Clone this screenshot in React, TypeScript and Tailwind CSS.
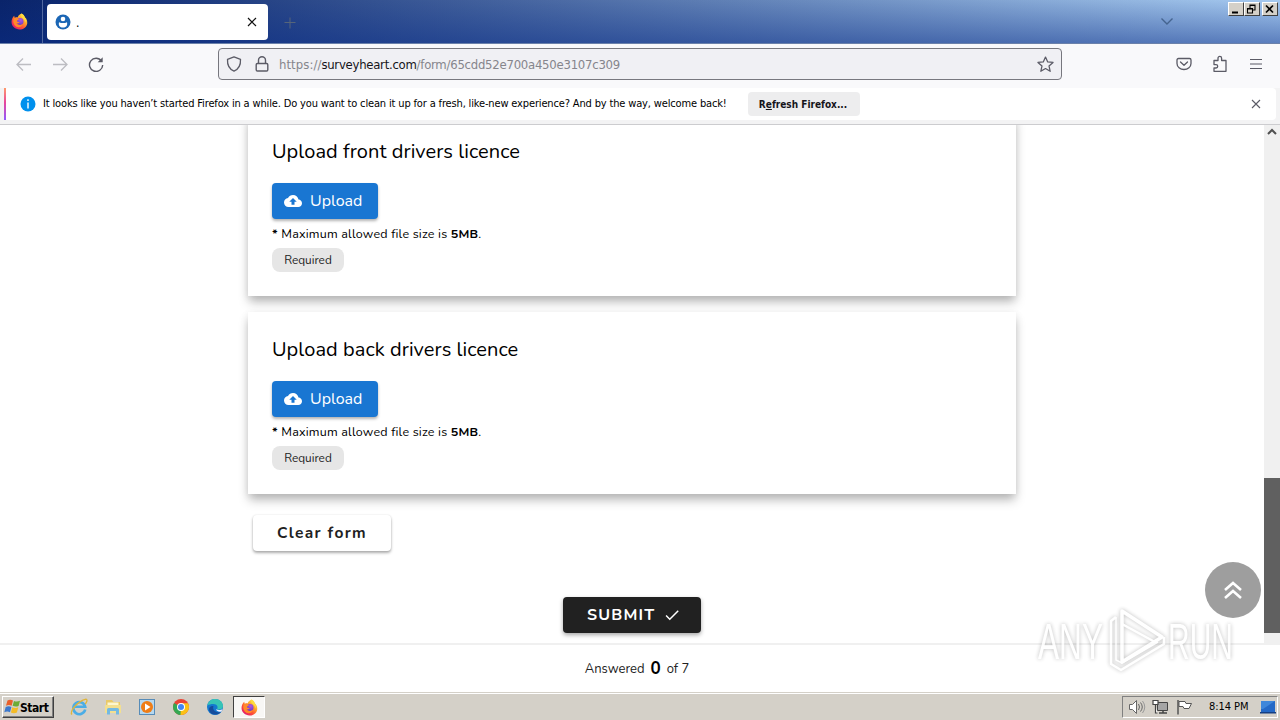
import React from 'react';

const UI_FONT = "font-['DejaVu_Sans_Condensed','DejaVu_Sans',sans-serif] [font-stretch:condensed]";

const FirefoxLogo: React.FC<{ size: number; id: string }> = ({ size, id }) => (
  <svg width={size} height={size} viewBox="0 0 32 32">
    <defs>
      <linearGradient id={`${id}-flame`} x1="0.9" y1="0.1" x2="0.2" y2="0.95">
        <stop offset="0" stopColor="#fff14a" />
        <stop offset="0.35" stopColor="#ffa32b" />
        <stop offset="0.65" stopColor="#ff5136" />
        <stop offset="1" stopColor="#e11a72" />
      </linearGradient>
      <radialGradient id={`${id}-globe`} cx="0.6" cy="0.3" r="0.8">
        <stop offset="0" stopColor="#b455e0" />
        <stop offset="1" stopColor="#5b3bc4" />
      </radialGradient>
    </defs>
    <path
      d="M20 1c4 2 5 5 6 7 4 3 5 8 4.500 12C29 27 23 31 16 31 8 31 1 25 1 17 1 12 3 8 6 5l1 4c2-1 4-1 6-1 0-3 3-5 7-7z"
      fill={`url(#${id}-flame)`}
    />
    <circle cx="17" cy="16" r="6.500" fill={`url(#${id}-globe)`} />
    <path d="M5 10c4-2 8-1 11 2-3 0-4 1-5 3 1 2 3 2 5 2-1 3-4 3-6 2 2 4 9 5 12 1-1 6-7 8-12 6C5 23 3 17 5 10z" fill="#ff8a2a" />
    <path d="M20 1c4 2 5 5 6 7 2 3 3 6 2 10-1-4-4-7-7-9-2-2-3-5-1-8z" fill="#ffdc3e" />
  </svg>
);

const TitleBar: React.FC = () => (
  <header className="relative flex h-11 shrink-0 items-start border-b border-[#6b81aa] bg-[linear-gradient(90deg,#0a246a_0%,#0f2b72_6%,#a6caf0_100%)]">
    <div className="absolute inset-0 bg-[linear-gradient(180deg,rgba(10,50,140,0)_0%,rgba(10,45,135,0.48)_100%)]" />
    <div className="relative flex h-[43px] w-[43px] items-center justify-center border-r border-[#5168a0] pr-[3px]">
      <FirefoxLogo size={17} id="app" />
    </div>
    <div className="relative mt-1 ml-1 flex h-9 w-[221px] items-center rounded bg-white pr-2.5 pl-2">
      <svg width="16" height="16" viewBox="0 0 16 16">
        <circle cx="8" cy="8" r="7.500" fill="#1b66b5" />
        <circle cx="8" cy="5" r="2.300" fill="#fff" />
        <path d="M4 8.200c2.600 1.200 5.400 1.200 8 0 .8 3.400-1 5.300-4 5.300s-4.800-1.900-4-5.300z" fill="#fff" />
      </svg>
      <span className={`${UI_FONT} ml-[5px] flex-1 pt-0.5 text-[12px] text-black`}>.</span>
      <svg width="12" height="12" viewBox="0 0 12 12" stroke="#111" strokeWidth="1.200">
        <path d="M2 2l8 8M10 2l-8 8" />
      </svg>
    </div>
    <svg className="relative mt-[17px] ml-4" width="12" height="12" viewBox="0 0 12 12" stroke="#56657a" strokeWidth="1">
      <path d="M6 0.500v11M0.500 5.500h11" />
    </svg>
    <svg className="relative mt-[17px] ml-auto" width="14" height="9" viewBox="0 0 14 9" fill="none" stroke="#45648f" strokeWidth="1.400">
      <path d="M1.500 1.500L7 7l5.500-5.500" />
    </svg>
    <div className="relative mt-0.5 mr-0.5 ml-[54px] flex">
      <WindowButton>
        <path d="M3 9.500h6" strokeWidth="2" />
      </WindowButton>
      <WindowButton>
        <path d="M5 5V2h5v5H8M4.500 2.500h6M2.500 5.500h5v4.500h-5zM2 6h6" strokeWidth="1.100" />
      </WindowButton>
      <span className="w-0.5" />
      <WindowButton>
        <path d="M3 2.500l7 7M10 2.500l-7 7" strokeWidth="1.700" />
      </WindowButton>
    </div>
  </header>
);

const WindowButton: React.FC<{ children: React.ReactNode }> = ({ children }) => (
  <div className="h-3.5 w-4 border border-t-white border-r-[#404040] border-b-[#404040] border-l-white bg-[#d4d0c8]">
    <svg width="13" height="12" viewBox="0 0 13 12" fill="none" stroke="#000">
      {children}
    </svg>
  </div>
);

const Toolbar: React.FC = () => (
  <div className="flex h-11 shrink-0 items-center bg-[#f9f9fb] pb-1">
    <div className="flex w-[218px] items-center gap-5 pl-4">
      <svg width="16" height="16" viewBox="0 0 16 16" fill="none" stroke="#bdbdc2" strokeWidth="1.300">
        <path d="M15 8.500H1.500M7 2.500l-6 6 6 6" />
      </svg>
      <svg width="16" height="16" viewBox="0 0 16 16" fill="none" stroke="#bdbdc2" strokeWidth="1.300">
        <path d="M1 8.500h13.500M9 2.500l6 6-6 6" />
      </svg>
      <svg width="16" height="16" viewBox="0 0 16 16" fill="none" stroke="#5b5b66" strokeWidth="1.400">
        <path d="M13.500 5A6.600 6.600 0 1 0 14.700 9" />
        <path d="M14.700 1.200v5H9.700z" fill="#5b5b66" stroke="none" />
      </svg>
    </div>
    <div className="flex h-8 w-[844px] items-center rounded border border-[#77777e] bg-[#f0f0f4] pr-[7px] pl-[7px]">
      <svg width="16" height="16" viewBox="0 0 16 16" fill="none" stroke="#5b5b66" strokeWidth="1.300">
        <path d="M8 0.800l6.500 2.500c.3 5-1.500 9.700-6.500 11.900C3 13 1.200 8.300 1.500 3.300z" strokeLinejoin="round" />
      </svg>
      <svg className="ml-3" width="16" height="16" viewBox="0 0 16 16" fill="none" stroke="#5b5b66" strokeWidth="1.400">
        <rect x="2.200" y="7.500" width="11.600" height="7.500" rx="1.200" />
        <path d="M4.500 7.500V4.300a3.500 3.500 0 0 1 7 0v3.200" />
      </svg>
      <span className={`${UI_FONT} ml-[9px] pt-0.5 text-[13px] whitespace-pre text-[#85858c]`}>
        <span className="tracking-[0.06px]">https://</span>
        <span className="tracking-[-0.27px] text-[#15141a]">surveyheart.com</span>
        <span className="tracking-[-0.25px]">/form/65cdd52e700a450e3107c309</span>
      </span>
      <svg className="ml-auto" width="17" height="17" viewBox="0 0 16 16" fill="none" stroke="#5b5b66" strokeWidth="1.200" strokeLinejoin="round">
        <path d="M8 1l2.100 4.600 5 .5-3.800 3.300 1.100 5L8 11.800l-4.400 2.600 1.100-5L.9 6.100l5-.5z" />
      </svg>
    </div>
    <div className="ml-auto flex items-center gap-5 pr-4">
      <svg width="16" height="16" viewBox="0 0 16 16" fill="none" stroke="#5b5b66" strokeWidth="1.300">
        <path d="M2.500 2.500h11q1.500 0 1.500 1.500v3.500a7 6 0 0 1-14 0V4q0-1.500 1.500-1.500z" />
        <path d="M4.500 6L8 9.300 11.500 6" strokeLinecap="round" strokeLinejoin="round" />
      </svg>
      <svg width="16" height="18" viewBox="0 0 16 18" fill="none" stroke="#5b5b66" strokeWidth="1.300" strokeLinejoin="round">
        <path d="M2 5.500h4V3.200a1.800 1.800 0 0 1 3.600 0v2.300h4.400v10.800H2v-3.300h2a1.700 1.700 0 0 0 0-3.400H2z" />
      </svg>
      <svg width="16" height="16" viewBox="0 0 16 16" stroke="#5b5b66" strokeWidth="1.200">
        <path d="M2 3.500h12M2 8h12M2 12.500h12" />
      </svg>
    </div>
  </div>
);

const NotificationBar: React.FC = () => (
  <div className="h-[37px] shrink-0 border-b border-[#cccccf] bg-[#f3f3f4] pr-1 pl-1">
    <div className="flex h-8 items-center rounded bg-white">
      <div className="h-full w-0.5 bg-[linear-gradient(180deg,#ff9a6b_0%,#e8479b_45%,#9059ff_100%)]" />
      <svg className="ml-3.5" width="16" height="16" viewBox="0 0 16 16">
        <circle cx="8" cy="8" r="7.500" fill="#0090ed" />
        <path d="M8 3.300v1.800M8 6.500v6" stroke="#fff" strokeWidth="1.400" />
      </svg>
      <span className={`${UI_FONT} ml-[7px] w-[705px] text-[11px] tracking-[-0.151px] whitespace-nowrap text-black`}>
        It looks like you haven’t started Firefox in a while. Do you want to clean it up for a fresh, like-new experience? And by the way, welcome back!
      </span>
      <button className={`${UI_FONT} h-6 w-28 rounded bg-[#ededee] pr-0.5 text-[10px] font-bold whitespace-nowrap text-[#15141a]`}>
        R<u>e</u>fresh Firefox...
      </button>
      <svg className="mr-[15px] ml-auto" width="10" height="10" viewBox="0 0 10 10" stroke="#5b5b66" strokeWidth="1.100">
        <path d="M1 1l8 8M9 1L1 9" />
      </svg>
    </div>
  </div>
);

const UploadCard: React.FC<{ title: string }> = ({ title }) => (
  <section className="flex h-[182px] shrink-0 flex-col items-start bg-white px-6 pt-6 shadow-[0_7px_10px_-1px_rgba(0,0,0,0.26),0_2px_8px_rgba(0,0,0,0.08)]">
    <h2 className="h-[27px] text-[20px] leading-[27px] font-normal tracking-[0.06px] whitespace-nowrap text-black">{title}</h2>
    <button className="mt-[18px] flex h-9 w-[106px] items-center rounded bg-[#1976d2] pl-3 text-white shadow-[0_2px_3px_rgba(0,0,0,0.3)]">
      <svg width="18" height="18" viewBox="0 0 24 24" fill="#fff">
        <path d="M19.350 10.040C18.670 6.590 15.640 4 12 4 9.110 4 6.600 5.640 5.350 8.040 2.340 8.360 0 10.910 0 14c0 3.310 2.690 6 6 6h13c2.760 0 5-2.240 5-5 0-2.640-2.050-4.780-4.650-4.960zM14 13v4h-4v-4H7l5-5 5 5h-3z" />
      </svg>
      <span className="ml-2 text-[16px]">Upload</span>
    </button>
    <p className="mt-[5px] h-5 text-[12.500px] leading-5 tracking-[0.19px] whitespace-nowrap text-black">
      <b>*</b> Maximum allowed file size is <b>5MB</b>.
    </p>
    <span className="mt-1 flex h-6 w-[72px] items-center justify-center rounded-lg bg-[#e6e6e6] pt-px text-[11.800px] text-[#222]">
      Required
    </span>
  </section>
);

const FormPage: React.FC = () => (
  <div className="flex h-[518px] shrink-0 overflow-hidden bg-white">
    <main className="flex flex-1 flex-col pl-[248px] font-['Nunito','Noto_Sans',sans-serif]">
      <div className="-mt-[11px] flex w-[768px] flex-col gap-4">
        <UploadCard title="Upload front drivers licence" />
        <UploadCard title="Upload back drivers licence" />
      </div>
      <button className="mt-[21px] ml-[5px] h-9 w-[138px] shrink-0 rounded bg-white text-[15.500px] font-bold tracking-[1.350px] whitespace-nowrap text-[#212121] shadow-[0_2px_3px_rgba(0,0,0,0.32),0_0_2px_rgba(0,0,0,0.1)]">
        Clear form
      </button>
      <button className="mt-[46px] ml-[315px] flex h-9 w-[138px] shrink-0 items-center rounded bg-[#212121] pl-6 text-[16px] font-bold tracking-[1.200px] text-white shadow-[0_2px_4px_rgba(0,0,0,0.35)]">
        <span className="w-[76px] text-left">SUBMIT</span>
        <svg width="18" height="18" viewBox="0 0 24 24" fill="#fff">
          <path d="M9 16.170L4.830 12l-1.420 1.410L9 19 21 7l-1.410-1.410z" />
        </svg>
      </button>
    </main>
    <div className="flex w-4 flex-col items-center bg-[#f0f0f0]">
      <svg className="mt-[3px] h-2 w-2.5 shrink-0" viewBox="0 0 10 8" fill="none" stroke="#505050" strokeWidth="2">
        <path d="M1 6l4-4 4 4" />
      </svg>
      <div className="mt-[342px] h-[155px] w-4 bg-[#606060]" />
    </div>
  </div>
);

const BottomBar: React.FC = () => (
  <footer className="flex h-[49px] shrink-0 items-center justify-center border-t-2 border-[#f0f0f0] bg-white pr-[6px] font-['Nunito','Noto_Sans',sans-serif] text-[13px] text-[#222]">
    <span className="pt-0.5">Answered</span>
    <b className="mx-1.5 text-[17px] leading-none text-black">0</b>
    <span className="pt-0.5">of 7</span>
  </footer>
);

const Watermark: React.FC = () => (
  <svg
    className="absolute top-[602px] left-[1030px] opacity-75 drop-shadow-[0_0_2px_rgba(0,0,0,0.35)]"
    width="250"
    height="76"
    viewBox="0 0 250 76"
    fill="none"
    stroke="#fff"
    strokeLinejoin="round"
  >
    <g fill="#fff" stroke="none" fontFamily="'Liberation Sans Narrow','Liberation Sans',sans-serif" fontSize="50">
      <text x="8" y="57" textLength="65" lengthAdjust="spacingAndGlyphs">ANY</text>
      <text x="138" y="57" textLength="65" lengthAdjust="spacingAndGlyphs">RUN</text>
    </g>
    <path d="M92 9l40 26-40 25z" strokeWidth="3.500" />
    <path d="M92 22l33 18M86 15l-5 4v43l10 6 43-26v-7" strokeWidth="2.500" />
    <path d="M86 15v43l6 3 36-21" strokeWidth="1.500" />
  </svg>
);

const TaskIcon: React.FC<{ children: React.ReactNode }> = ({ children }) => (
  <div className="flex h-[22px] w-[34px] items-center justify-center">
    <svg width="18" height="18" viewBox="0 0 18 18">{children}</svg>
  </div>
);

const Taskbar: React.FC = () => (
  <div className="flex h-7 shrink-0 items-center bg-[#d4d0c8] pt-0.5 shadow-[inset_0_1px_0_#d4d0c8,inset_0_2px_0_#fff]">
    <button className={`${UI_FONT} ml-0.5 flex h-[22px] w-[52px] items-center border border-t-white border-r-[#404040] border-b-[#404040] border-l-white pl-px text-[12px] font-bold tracking-[-0.45px] text-black shadow-[inset_-1px_-1px_0_#808080]`}>
      <svg className="shrink-0" width="16" height="16" viewBox="0 0 16 16">
        <path d="M3.500 1.500Q6 0 9 1.500L7.600 6.800Q5 5.300 2 6.800z" fill="#e9602b" />
        <path d="M10 2q3 1.300 6-.2l-1.400 5.200q-3 1.300-6-.2z" fill="#6cac36" />
        <path d="M1.700 7.900q3-1.500 5.700 0L6 13.200q-2.700-1.500-5.700 0z" fill="#3b78cd" />
        <path d="M8.300 8.200q3 1.500 6 .1L12.900 13.500q-3 1.400-6 0z" fill="#f4bc27" />
      </svg>
      <span className="pt-px">Start</span>
    </button>
    <div className="ml-2 flex">
      <TaskIcon>
        <path d="M15.200 11.500A6 6 0 1 1 15.200 8.800H5" fill="none" stroke="#4badE6" strokeWidth="2.600" />
        <path d="M2 16.500C-1 14 7 3.500 16 1.200c2 .4.500 3.500-.8 4.800" fill="none" stroke="#e0b53a" strokeWidth="1.300" />
      </TaskIcon>
      <TaskIcon>
        <path d="M2 2h6l1.500 2H16v11H2z" fill="#e9c968" />
        <path d="M3.500 4.500h11V8h-11z" fill="#fdf6cf" />
        <path d="M1 7h16v8H1z" fill="#f3df90" />
        <path d="M3 16.500v-5q0-1.500 1.500-1.500h9q1.500 0 1.500 1.500v5h-3V13H6v3.500z" fill="#74b9e2" />
      </TaskIcon>
      <TaskIcon>
        <rect x="1.500" y="1.500" width="15" height="15" fill="#b6d8ef" stroke="#578cb8" />
        <circle cx="9" cy="9" r="6" fill="#ef7d16" />
        <path d="M7 5.500L12.500 9 7 12.500z" fill="#fff" />
      </TaskIcon>
      <TaskIcon>
        <circle cx="9" cy="9" r="8" fill="#ea4335" />
        <path d="M2.100 5A8 8 0 0 0 8.500 17l4-6.500L9 9z" fill="#34a853" />
        <path d="M8.500 17A8 8 0 0 0 16 5.200H9z" fill="#fbc116" />
        <circle cx="9" cy="9" r="4" fill="#fff" />
        <circle cx="9" cy="9" r="3" fill="#4285f4" />
      </TaskIcon>
      <TaskIcon>
        <circle cx="9" cy="9" r="8" fill="#1479cf" />
        <path d="M1.300 7.500C2.500 3 5.500 1 9 1c5 0 8 3.500 8 7 0 3-3 4-6 3.300 1.500-2.300 0-5.300-3.500-5.300-2.500 0-4.700.5-6.200 1.500z" fill="#37c4b6" />
        <path d="M7.500 8c-1.500 3.500 2 7 7.500 6-4 4.500-12 3-12-3 0-2 2-3.500 4.500-3z" fill="#164c9c" />
        <path d="M10 11.300c2 1 5 .8 6.500-.3l-1 2.500c-2.500.8-5 0-5.500-2.200z" fill="#eef" />
      </TaskIcon>
    </div>
    <div className="ml-px flex h-[22px] w-8 items-center justify-center border border-t-[#404040] border-r-white border-b-white border-l-[#404040] bg-[#f8f7f5]">
      <FirefoxLogo size={17} id="task" />
    </div>
    <div className="mr-0.5 ml-auto flex h-[22px] w-[156px] items-center border border-t-[#808080] border-r-white border-b-white border-l-[#808080] pl-[5px]">
      <svg width="18" height="16" viewBox="0 0 18 16" fill="#fff" stroke="#666" strokeWidth="1">
        <path d="M1.500 5.500h3l4-4v13l-4-4h-3z" />
        <path d="M10.500 5q2 3 0 6M12.500 3.500q3.500 4.500 0 9" fill="none" />
        <path d="M14.500 2q4.500 6 0 12" fill="none" stroke="#999" />
      </svg>
      <svg className="ml-1.5" width="17" height="16" viewBox="0 0 17 16" fill="#fff" stroke="#444">
        <path d="M5.500 3.500h10v8h-10z" fill="#a5a5a5" />
        <path d="M7 14h8M11 12v2" strokeWidth="1.500" />
        <path d="M1 1.500h5v4H1zM3.500 5.500V14h2" strokeWidth="1.200" />
      </svg>
      <svg className="ml-[7px]" width="16" height="16" viewBox="0 0 16 16" fill="#fff" stroke="#555">
        <path d="M2 1v14.500" strokeWidth="1.500" />
        <path d="M3 2.500h6l1 2h5.500l-2.500 5H8l-1-2H3z" />
      </svg>
      <span className={`${UI_FONT} ml-[17px] pt-px text-[11px] tracking-[-0.05px] whitespace-nowrap text-black`}>8:14 PM</span>
      <svg className="mr-px ml-auto" width="16" height="14" viewBox="0 0 16 14">
        <path d="M1 1h14v11H1z" fill="#2469c7" />
        <path d="M1 1h14L3 9H1z" fill="#3f87da" />
        <path d="M0 12h16v1.500H0z" fill="#153f83" />
      </svg>
    </div>
  </div>
);

export default function App() {
  return (
    <div className="relative flex h-[720px] w-[1280px] flex-col overflow-hidden bg-white">
      <TitleBar />
      <Toolbar />
      <NotificationBar />
      <FormPage />
      <BottomBar />
      <Taskbar />
      <button className="absolute top-[562px] left-[1205px] flex h-14 w-14 items-center justify-center rounded-full bg-[#9e9e9e]">
        <svg width="20" height="20" viewBox="0 0 20 20" fill="none" stroke="#fff" strokeWidth="2.600">
          <path d="M2 10l8-7 8 7M2 18l8-7 8 7" />
        </svg>
      </button>
      <Watermark />
    </div>
  );
}
